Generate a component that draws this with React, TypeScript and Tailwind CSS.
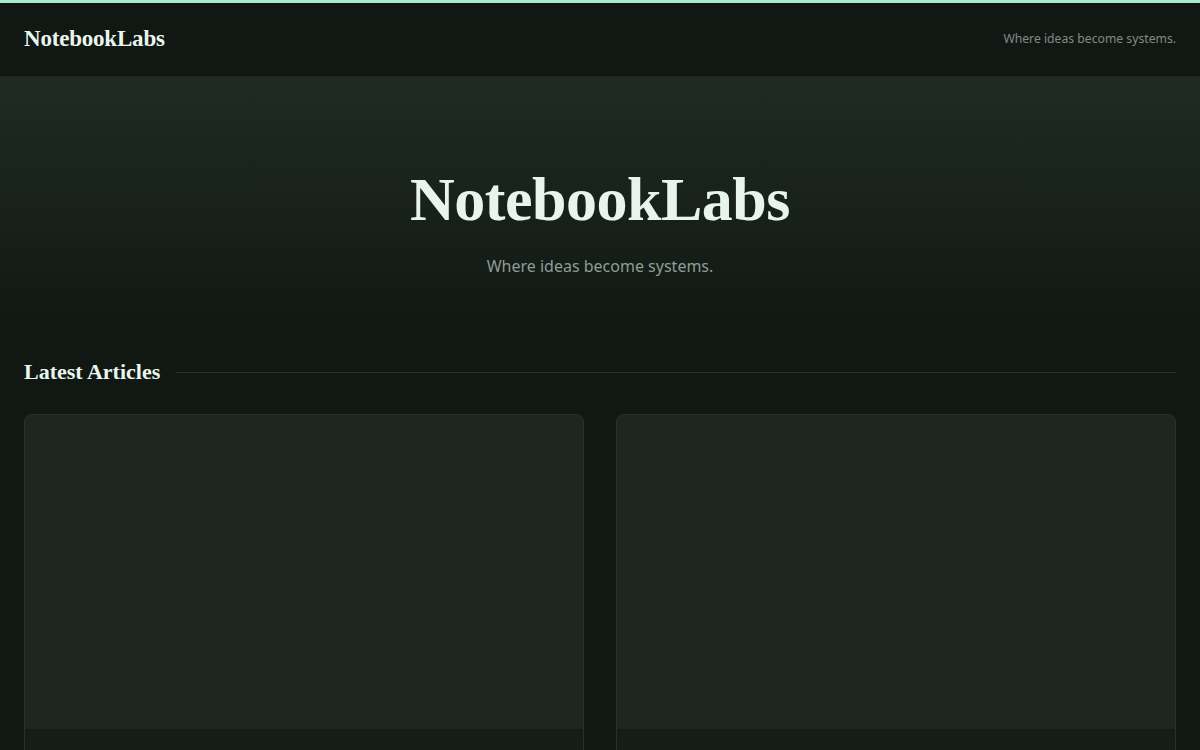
import React from "react";

const serif = { fontFamily: '"Liberation Serif", "DejaVu Serif", serif' };

function Card() {
  return (
    <div className="overflow-hidden rounded-lg border border-[#29312c] bg-[#1f2622]">
      <div className="aspect-video w-full bg-[#1f2622]" />
      <div className="h-[180px] bg-[#161d19] px-6 py-5" />
    </div>
  );
}

export default function App() {
  return (
    <div
      className="min-h-screen bg-[#111814] text-[#e6f2ea]"
      style={{ fontFamily: '"Noto Sans", "Open Sans", sans-serif' }}
    >
      <div className="h-[3px] bg-[#a7ecc9]" />
      <header className="flex h-[74px] items-center justify-between border-b border-[#1c2520] bg-[#111814] px-6">
        <div className="text-[23px] font-bold tracking-[-0.2px] text-[#eaf5ee]" style={serif}>
          NotebookLabs
        </div>
        <div className="text-[12.2px] text-[#7f8c85]">Where ideas become systems.</div>
      </header>

      <section className="bg-gradient-to-b from-[#202b24] to-[#111814] pb-12 pt-[87px] text-center">
        <h1 className="text-[62px] font-bold leading-[70px] tracking-[-0.5px] text-[#e8f5ee]" style={serif}>
          NotebookLabs
        </h1>
        <p className="mt-5 text-[16px] leading-6 text-[#8e9d95]">Where ideas become systems.</p>
      </section>

      <main className="px-6 pt-8">
        <div className="mb-7 flex items-center gap-4">
          <h2 className="text-[22px] font-bold leading-7 text-[#eaf5ee]" style={serif}>
            Latest Articles
          </h2>
          <div className="h-px flex-1 bg-[#26302a]" />
        </div>
        <div className="grid grid-cols-2 gap-8">
          <Card />
          <Card />
        </div>
      </main>
    </div>
  );
}
